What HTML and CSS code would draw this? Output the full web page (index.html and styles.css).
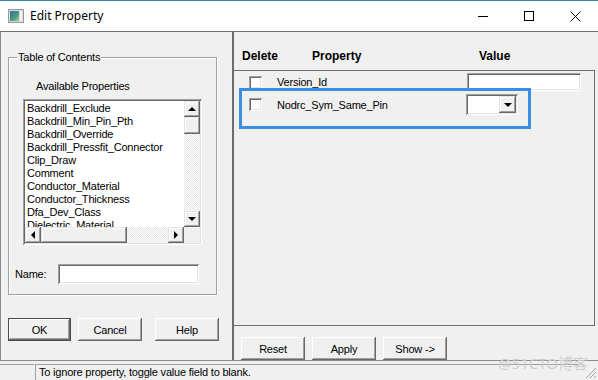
FILE: index.html
```html
<!DOCTYPE html>
<html>
<head>
<meta charset="utf-8">
<link rel="stylesheet" href="styles.css">
</head>
<body>
<div class="window">
  <div class="titlebar">
    <svg class="appicon" width="16" height="14" viewBox="0 0 16 14">
      <defs>
        <linearGradient id="ig" x1="0" y1="0" x2="1" y2="1">
          <stop offset="0" stop-color="#2f6f9a"/>
          <stop offset="0.6" stop-color="#4d9a86"/>
          <stop offset="1" stop-color="#a7cf9c"/>
        </linearGradient>
      </defs>
      <rect x="0.5" y="0.5" width="15" height="13" fill="#d8d8d8" stroke="#9a9a9a"/>
      <rect x="2" y="2" width="9" height="10" fill="url(#ig)"/>
      <rect x="12" y="2" width="2" height="10" fill="#f4f4f4"/>
    </svg>
    <span class="title">Edit Property</span>
    <div class="controls">
      <div class="ctl"><svg width="10" height="10" viewBox="0 0 10 10"><line x1="0" y1="5.5" x2="10" y2="5.5" stroke="#000" stroke-width="1"/></svg></div>
      <div class="ctl"><svg width="10" height="10" viewBox="0 0 10 10"><rect x="0.5" y="0.5" width="9" height="9" fill="none" stroke="#000" stroke-width="1"/></svg></div>
      <div class="ctl"><svg width="11" height="11" viewBox="0 0 11 11"><path d="M0.5 0.5 L10.5 10.5 M10.5 0.5 L0.5 10.5" stroke="#000" stroke-width="1"/></svg></div>
    </div>
  </div>

  <div class="main">
    <div class="left">
      <div class="group">
        <span class="legend">Table of Contents</span>
        <div class="avail">Available Properties</div>
        <div class="listbox sunken">
          <div class="lrow">
            <div class="items">
              <div>Backdrill_Exclude</div>
              <div>Backdrill_Min_Pin_Pth</div>
              <div>Backdrill_Override</div>
              <div>Backdrill_Pressfit_Connector</div>
              <div>Clip_Draw</div>
              <div>Comment</div>
              <div>Conductor_Material</div>
              <div>Conductor_Thickness</div>
              <div>Dfa_Dev_Class</div>
              <div>Dielectric_Material</div>
            </div>
            <div class="vscroll">
              <div class="sbtn"><span class="tri up"></span></div>
              <div class="sbtn vthumb"></div>
              <div class="track"></div>
              <div class="sbtn"><span class="tri down"></span></div>
            </div>
          </div>
          <div class="hscroll">
            <div class="sbtn"><span class="tri lft"></span></div>
            <div class="sbtn hthumb"></div>
            <div class="track"></div>
            <div class="sbtn"><span class="tri rgt"></span></div>
            <div class="corner"></div>
          </div>
        </div>
        <div class="namerow">
          <span class="namelabel">Name:</span>
          <div class="nameinput sunken"></div>
        </div>
      </div>
      <div class="btnrow leftbtns">
        <div class="btn default">OK</div>
        <div class="btn">Cancel</div>
        <div class="btn help">Help</div>
      </div>
    </div>

    <div class="divider"></div>

    <div class="right">
      <div class="head">
        <span>Delete</span>
        <span>Property</span>
        <span>Value</span>
      </div>
      <div class="propbox">
        <div class="prow r1">
          <div class="check sunken"></div>
          <span class="plabel">Version_Id</span>
          <div class="vinput sunken"></div>
        </div>
        <div class="prow r2">
          <div class="check sunken"></div>
          <span class="plabel">Nodrc_Sym_Same_Pin</span>
          <div class="combo sunken"><div class="sbtn cbtn"><span class="tri down"></span></div></div>
        </div>
        <div class="highlight"></div>
      </div>
      <div class="btnrow rightbtns">
        <div class="btn">Reset</div>
        <div class="btn">Apply</div>
        <div class="btn">Show -&gt;</div>
      </div>
    </div>
  </div>

  <div class="status">
    <div class="cell c1"></div>
    <div class="cell c2">To ignore property, toggle value field to blank.</div>
    <svg class="grip" width="12" height="12" viewBox="0 0 12 12">
      <path d="M11 1 L1 11 M11 5 L5 11 M11 9 L9 11" stroke="#a0a0a0" stroke-width="1"/>
    </svg>
  </div>

  <div class="watermark">@51CTO博客</div>
</div>
</body>
</html>
```

FILE: styles.css
```css
* { box-sizing: border-box; }
html, body { margin: 0; padding: 0; }
body {
  width: 598px;
  height: 380px;
  overflow: hidden;
  background: #f0f0f0;
  font-family: "Liberation Sans", Arial, sans-serif;
  font-size: 11px;
  letter-spacing: -0.2px;
  color: #000;
}
.window {
  position: relative;
  width: 598px;
  height: 380px;
  display: flex;
  flex-direction: column;
}

/* title bar */
.titlebar {
  flex: none;
  height: 31px;
  background: #fff;
  border-top: 1px solid #3b87a6;
  display: flex;
  align-items: center;
  padding-left: 8px;
}
.appicon { flex: none; margin-top: -1px; }
.title {
  font-family: "Noto Sans", "Open Sans", sans-serif;
  font-size: 12px;
  letter-spacing: 0;
  margin-left: 6px;
  margin-top: -1px;
}
.controls { margin-left: auto; display: flex; height: 100%; }
.ctl {
  width: 46px;
  display: flex;
  align-items: center;
  justify-content: center;
}
.ctl svg { display: block; }

/* main area */
.main {
  flex: none;
  height: 330px;
  display: flex;
  border-top: 1px solid #707070;
  border-bottom: 1px solid #8a8a8a;
}
.left {
  width: 232px;
  flex: none;
  border-left: 1px solid #8a8a8a;
  padding: 25px 0 0 7px;
}
.divider { width: 2px; flex: none; background: #6d6d6d; }
.right { flex: 1; display: flex; flex-direction: column; }

/* group box */
.group {
  position: relative;
  width: 209px;
  height: 238px;
  border: 1px solid #a0a0a0;
  box-shadow: 1px 1px 0 #fff, inset 1px 1px 0 #fff;
  padding-top: 22px;
  display: flex;
  flex-direction: column;
}
.legend {
  position: absolute;
  top: -7px;
  left: 8px;
  padding: 0 1px;
  line-height: 13px;
  background: #f0f0f0;
}
.avail { line-height: 13px; margin-left: 27px; }

.sunken {
  background: #fff;
  box-shadow: inset 1px 1px #a0a0a0, inset -1px -1px #fff, inset 2px 2px #696969, inset -2px -2px #e3e3e3;
}
.listbox {
  width: 179px;
  height: 146px;
  margin: 6px 0 0 14px;
  padding: 2px;
  display: flex;
  flex-direction: column;
}
.lrow { height: 126px; display: flex; }
.items {
  flex: 1;
  overflow: hidden;
  padding: 1px 0 0 2px;
  line-height: 13px;
  white-space: nowrap;
}
.vscroll { width: 16px; display: flex; flex-direction: column; }
.hscroll { height: 16px; display: flex; }
.track {
  flex: 1;
  background: repeating-conic-gradient(#fff 0 25%, #e4e4e4 0 50%) 0 0 / 2px 2px;
}
.sbtn {
  flex: none;
  width: 16px;
  height: 16px;
  background: #f0f0f0;
  box-shadow: inset -1px -1px #696969, inset 1px 1px #e3e3e3, inset -2px -2px #a0a0a0, inset 2px 2px #fff;
  display: flex;
  align-items: center;
  justify-content: center;
}
.vthumb { height: 17px; }
.hthumb { width: 86px; }
.corner { width: 16px; flex: none; background: #f0f0f0; }
.tri { width: 0; height: 0; display: block; }
.tri.up { border-left: 4px solid transparent; border-right: 4px solid transparent; border-bottom: 4px solid #000; }
.tri.down { border-left: 4px solid transparent; border-right: 4px solid transparent; border-top: 4px solid #000; }
.tri.lft { border-top: 4px solid transparent; border-bottom: 4px solid transparent; border-right: 4px solid #000; }
.tri.rgt { border-top: 4px solid transparent; border-bottom: 4px solid transparent; border-left: 4px solid #000; }

.namerow {
  display: flex;
  align-items: center;
  margin: 19px 0 0 6px;
  height: 20px;
}
.namelabel { width: 43px; }
.nameinput { width: 141px; height: 20px; }

/* buttons */
.btnrow { display: flex; }
.leftbtns { margin-top: 23px; gap: 7px; }
.leftbtns .btn:first-child { width: 63px; }
.leftbtns .help { margin-left: 6px; }
.btn {
  width: 64px;
  height: 23px;
  background: #f0f0f0;
  box-shadow: inset -1px -1px #696969, inset 1px 1px #fff, inset -2px -2px #a0a0a0, inset 2px 2px #f0f0f0;
  display: flex;
  align-items: center;
  justify-content: center;
}
.btn.default {
  box-shadow: inset 0 0 0 1px #4a4a4a, inset -2px -2px #696969, inset 2px 2px #fff, inset -3px -3px #a0a0a0;
}
.rightbtns { margin: 11px 0 0 7px; gap: 7px; }

/* right panel */
.head {
  height: 38px;
  flex: none;
  padding: 17px 0 0 8px;
  display: grid;
  grid-template-columns: 70px 167px auto;
  font-weight: bold;
  font-size: 12px;
  letter-spacing: 0;
  line-height: 14px;
}
.propbox {
  position: relative;
  flex: none;
  height: 256px;
  margin-right: 3px;
  border-top: 1px solid #6d6d6d;
  border-right: 1px solid #6d6d6d;
  border-bottom: 1px solid #6d6d6d;
}
.prow { display: flex; align-items: center; padding-left: 15px; }
.prow.r1 { height: 22px; }
.prow.r2 { height: 23px; }
.check { width: 13px; height: 13px; flex: none; }
.plabel { width: 205px; flex: none; padding-left: 15px; }
.r2 .plabel { width: 204px; }
.vinput { width: 114px; height: 18px; flex: none; margin-top: -1px; }
.combo {
  width: 52px;
  height: 21px;
  flex: none;
  padding: 2px;
  display: flex;
  justify-content: flex-end;
}
.cbtn { width: 17px; height: 17px; }
.highlight {
  position: absolute;
  left: 5px;
  top: 17px;
  width: 292px;
  height: 41px;
  border: 3px solid #3a8ee0;
}

/* status bar */
.status {
  flex: 1;
  display: flex;
  padding-top: 3px;
  position: relative;
}
.cell {
  border-top: 1px solid #a0a0a0;
  border-left: 1px solid #a0a0a0;
  line-height: 15px;
}
.c1 { width: 34px; border-left: none; }
.c2 { flex: 1; margin-left: 1px; padding-left: 3px; margin-right: 14px; }
.grip { position: absolute; right: 1px; bottom: 1px; }

.watermark {
  position: absolute;
  right: 10px;
  bottom: 9px;
  font-family: "Noto Sans", "Noto Sans CJK SC", sans-serif;
  font-size: 15px;
  letter-spacing: 0;
  color: #cfcfcf;
  line-height: 16px;
}
```
